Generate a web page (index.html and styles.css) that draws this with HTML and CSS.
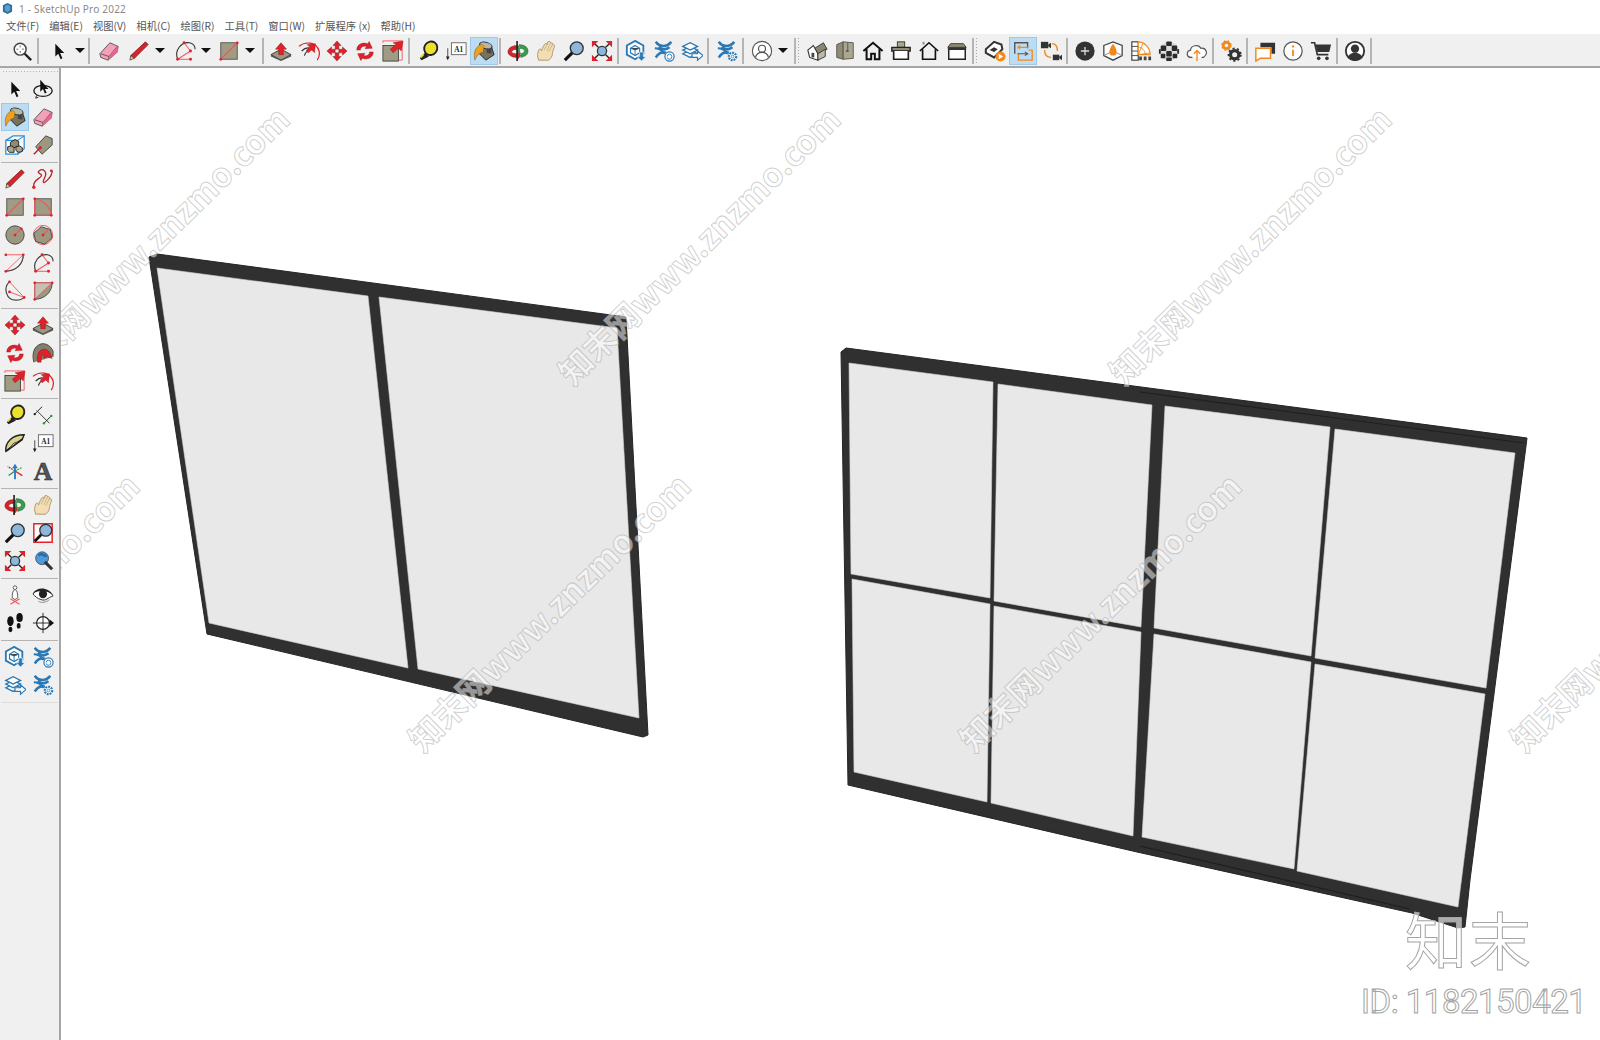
FILE: index.html
```html
<!DOCTYPE html>
<html lang="zh-CN">
<head>
    <meta charset="UTF-8">
    <title>1 - SketchUp Pro 2022</title>
    <link rel="stylesheet" href="styles.css">
</head>
<body>
    <!-- icon sprite, every toolbar button points at one of these -->
    <svg class="sprite" xmlns="http://www.w3.org/2000/svg">
        <symbol id="i-search" viewBox="0 0 24 24"><circle cx="10" cy="10" r="6.5" fill="#fff" stroke="#444" stroke-width="1.6"/><path d="M10 6v2M10 12v2M6 10h2M12 10h2" stroke="#555"/><path d="M15 15l7 7" stroke="#222" stroke-width="2.6"/></symbol>
        <symbol id="i-select" viewBox="0 0 24 24"><path d="M8 4v14l3.200-3.100 2.600 6 1.900-.9-2.500-5.700h4.500z" fill="#111"/></symbol>
        <symbol id="i-eraser" viewBox="0 0 24 24"><path d="M2 15L13 3l9 4-1 6-10 9-8-3z" fill="#f3a0b8" stroke="#555"/><path d="M3 15l9 3 9-11M12 18l-1 4" fill="none" stroke="#555"/><path d="M12 18l9-11 1 6-11 9z" fill="#e4688c"/></symbol>
        <symbol id="i-pencil" viewBox="0 0 24 24"><path d="M19 2l3 3L7 20l-4-1 0-2z" fill="#d8232a" stroke="#611" stroke-width=".7"/><path d="M3 17l-1 5 5-2z" fill="#d9c08c" stroke="#333" stroke-width=".7"/></symbol>
        <symbol id="i-arc3" viewBox="0 0 24 24"><path d="M4 21C0 11 8 2 17 3c4 1 6 4 6 7" fill="none" stroke="#333" stroke-width="1.2"/><path d="M4 21L18 12 11 3M4 21h14" fill="none" stroke="#ef5a60" stroke-width="1.1"/><g fill="#e0202a"><circle cx="4" cy="21" r="1.6"/><circle cx="18" cy="12" r="1.6"/><circle cx="11" cy="3" r="1.6"/><circle cx="18" cy="21" r="1.6"/></g></symbol>
        <symbol id="i-rect" viewBox="0 0 24 24"><rect x="3" y="3" width="18" height="18" fill="#a09c84" stroke="#555"/><path d="M3 21L21 3" stroke="#f0565c" stroke-width="1.3"/><circle cx="3" cy="21" r="1.5" fill="#e0202a"/><circle cx="21" cy="3" r="1.5" fill="#e0202a"/></symbol>
        <symbol id="i-rotrect" viewBox="0 0 24 24"><rect x="3" y="3" width="18" height="18" fill="#a09c84" stroke="#555"/><path d="M3 3v18h18M3 3C12 4 20 12 21 21" fill="none" stroke="#f0565c" stroke-width="1.2"/><g fill="#e0202a"><circle cx="3" cy="3" r="1.5"/><circle cx="3" cy="21" r="1.5"/><circle cx="21" cy="21" r="1.5"/></g></symbol>
        <symbol id="i-push" viewBox="0 0 24 24"><path d="M1 16l11-6 11 6-11 6z" fill="#9c9880" stroke="#333"/><path d="M1 16v2l11 5 11-5v-2l-11 6z" fill="#555"/><path d="M12 3l6 7h-3.500v6h-5v-6H6z" fill="#e0202a" stroke="#811" stroke-width=".5"/></symbol>
        <symbol id="i-follow" viewBox="0 0 24 24"><path d="M1 7C8 1 20 2 23 12c1 4 0 7-2 10" fill="none" stroke="#e0202a" stroke-width="1.3"/><path d="M4 12c3-3 6-4 9-3M7 17c1-3 3-5 5-5" fill="none" stroke="#333" stroke-width="1.3"/><path d="M19 4l-1 10-3-3-4 3-2-3 4-3-3-3z" fill="#e0202a" stroke="#811" stroke-width=".4"/></symbol>
        <symbol id="i-move" viewBox="0 0 24 24"><g fill="#e0202a" stroke="#611" stroke-width=".4"><path d="M12 1l4.500 5H14v4h-4V6H7.500z"/><path d="M12 23l4.500-5H14v-4h-4v4H7.500z"/><path d="M1 12l5-4.500V10h4v4H6v2.500z"/><path d="M23 12l-5-4.500V10h-4v4h4v2.500z"/></g></symbol>
        <symbol id="i-rotate" viewBox="0 0 24 24"><g fill="#e0202a" stroke="#811" stroke-width=".4"><path d="M3 11C3 5 9 2 15 4l1.500-2.500L20 9l-8 .5 1.500-2.500C10 6 7 8 7 11z"/><path d="M21 13c0 6-6 9-12 7l-1.500 2.500L4 15l8-.5-1.500 2.500c3.500 1 6.500-1 6.500-4z"/></g></symbol>
        <symbol id="i-scale" viewBox="0 0 24 24"><rect x="1" y="6" width="17" height="17" fill="#a09c84" stroke="#444"/><path d="M1 3v-2h21v21h-4" fill="none" stroke="#f0565c"/><path d="M23 1l-2 11-3-3-6 5-3-4 6-5-3-2z" fill="#e0202a" stroke="#811" stroke-width=".4"/></symbol>
        <symbol id="i-tape" viewBox="0 0 24 24"><ellipse cx="15" cy="9" rx="7" ry="7.500" transform="rotate(35 15 9)" fill="#ece02c" stroke="#222" stroke-width="2"/><path d="M9 14l-6 6 2 2 8-4z" fill="#222"/><path d="M4 19l3-3" stroke="#ece02c" stroke-width="2"/></symbol>
        <symbol id="i-text" viewBox="0 0 24 24"><rect x="7" y="3" width="16" height="13" fill="#fff" stroke="#666"/><text x="15" y="13" class="sym-text">A1</text><path d="M3 9v10" stroke="#444"/><path d="M1 18h4l-2 4z" fill="#222"/></symbol>
        <symbol id="i-paint" viewBox="0 0 24 24"><path d="M9 4l11 3 3 9-9 6-8-8z" fill="#76725c" stroke="#222"/><ellipse cx="14" cy="6" rx="7" ry="3.500" transform="rotate(15 14 6)" fill="#bbb6a0" stroke="#222"/><path d="M10 5C3 6 0 13 2 22c2-5 5-8 9-9l1-6z" fill="#f0a11c" stroke="#654" stroke-width=".5"/><path d="M15 9l5 1v5l-5-1z" fill="#444"/></symbol>
        <symbol id="i-orbit" viewBox="0 0 24 24"><path d="M11 6C5 6 1 9 1 13c0 3 4 6 10 6v3l4-5-4-5v3c-3 0-6-1-6-2s2-3 6-3z" fill="#d8232a" stroke="#511" stroke-width=".4"/><path d="M13 15c4 0 6-1 6-3s-2-3-6-3V6l-4 4 4 4zM13 5c6 0 10 3 10 7s-3 6-8 7v-3" fill="#3a9a4a" stroke="#143" stroke-width=".4"/><path d="M11 1v22" stroke="#222" stroke-width="1.800"/></symbol>
        <symbol id="i-hand" viewBox="0 0 24 24"><path d="M4 22C2 17 3 14 4 11c1-2 3-1 3 1 1-3 3-7 4-8 2-1 2 1 2 1l1-3c2-1 3 0 3 1 1 0 3 0 2 2 2 0 3 1 2 3-1 3-2 5-2 7 0 3-2 5-4 7z" fill="#f3deb4" stroke="#a89468"/><path d="M10 11l3-6M13 12l4-9M15 13l4-8" fill="none" stroke="#c0aa7c" stroke-width=".8"/></symbol>
        <symbol id="i-zoom" viewBox="0 0 24 24"><circle cx="15" cy="9" r="7" fill="#8db8dc" stroke="#333" stroke-width="1.500"/><path d="M10 14l-8 8" stroke="#111" stroke-width="3.400"/></symbol>
        <symbol id="i-zoomwin" viewBox="0 0 24 24"><path d="M2 2h20v20H2z" fill="#fff" stroke="#e8202a" stroke-width="1.600"/><circle cx="15" cy="9" r="6.500" fill="#8db8dc" stroke="#333" stroke-width="1.400"/><path d="M10 14l-7 7" stroke="#111" stroke-width="3"/></symbol>
        <symbol id="i-zoomext" viewBox="0 0 24 24"><circle cx="12" cy="12" r="5" fill="#8db8dc" stroke="#333" stroke-width="1.400"/><path d="M8 16l-5 5M16 8l4-4M8 8L4 4M16 16l4 4" stroke="#222" stroke-width="1.500"/><g fill="#e0202a"><path d="M1 1h7L1 8zM23 1h-7l7 7zM1 23h7l-7-7zM23 23h-7l7-7z"/></g></symbol>
        <symbol id="i-prev" viewBox="0 0 24 24"><circle cx="11" cy="9" r="7" fill="#4f9ad6" stroke="#456"/><path d="M6 5c3-3 9-2 11 2l-3 1c-2-2-4-3-6-1z" fill="#1e6eb0"/><path d="M14 13l8 8" stroke="#333" stroke-width="3.400"/></symbol>
        <symbol id="i-wh" viewBox="0 0 24 24"><path d="M11 1l9 5v9l-9 6-9-5V6z" fill="#fff" stroke="#2a78b4" stroke-width="2"/><path d="M11 6l5 3v5l-5 3-5-3V9z" fill="none" stroke="#2a78b4" stroke-width="1.300"/><path d="M11 11v6M6 9l5 2 5-2" stroke="#2a78b4"/><path d="M16 13h4v5h3l-5 5-5-5h3z" fill="#2a78b4" stroke="#fff" stroke-width=".7"/></symbol>
        <symbol id="i-ext" viewBox="0 0 24 24"><path d="M3 2c4 6 12 6 17 0M3 19c4-6 8-6 11-5M6 8c4 3 8 3 12 0" fill="none" stroke="#2a78b4" stroke-width="2.800"/><path d="M2 9c7 0 8 3 11 6" fill="none" stroke="#2a78b4" stroke-width="2.400"/><circle cx="18" cy="18" r="5" fill="#fff" stroke="#2a78b4" stroke-width="1.300"/><path d="M15.500 18a2.500 2.500 0 0 1 5 0M20.500 18a2.500 2.500 0 0 1-5 1" fill="none" stroke="#2a78b4"/></symbol>
        <symbol id="i-extgear" viewBox="0 0 24 24"><path d="M3 2c4 6 12 6 17 0M3 19c4-6 8-6 11-5M6 8c4 3 8 3 12 0" fill="none" stroke="#2a78b4" stroke-width="2.800"/><path d="M2 9c7 0 8 3 11 6" fill="none" stroke="#2a78b4" stroke-width="2.400"/><circle cx="18" cy="18" r="4" fill="#fff" stroke="#2a78b4" stroke-width="2.400" stroke-dasharray="2 1"/><circle cx="18" cy="18" r="1.500" fill="#fff" stroke="#2a78b4" stroke-width=".8"/></symbol>
        <symbol id="i-layers" viewBox="0 0 24 24"><g fill="#fff" stroke="#2a78b4" stroke-width="1.500"><path d="M2 15l8-4 8 4-8 4z"/><path d="M2 11l8-4 8 4-8 4z"/><path d="M2 7l8-4 8 4-8 4z"/></g><path d="M12 15h6v-3l6 5-6 5v-3h-6z" fill="#fff" stroke="#2a78b4" stroke-width="1.300"/></symbol>
        <symbol id="i-user" viewBox="0 0 24 24"><circle cx="12" cy="12" r="10.500" fill="#fff" stroke="#555" stroke-width="1.200"/><circle cx="12" cy="9.500" r="3.800" fill="none" stroke="#555" stroke-width="1.300"/><path d="M5 19c1-5 4-5.500 7-5.500s6 .5 7 5.500" fill="none" stroke="#555" stroke-width="1.300"/></symbol>
        <symbol id="i-iso" viewBox="0 0 24 24"><path d="M8 10l11-7 4 7-10 5z" fill="#8a8672" stroke="#333"/><path d="M2 11l6-5 5 9v7l-9-3z" fill="#fff" stroke="#333" stroke-width="1.200"/><path d="M13 15l8-5v8l-8 4z" fill="#bdb9a2" stroke="#333"/><rect x="6" y="14" width="3" height="5" fill="#444"/></symbol>
        <symbol id="i-door" viewBox="0 0 24 24"><path d="M3 5l7-3v19l-7-2z" fill="#8f8b74" stroke="#555"/><path d="M10 2l11 1v17l-11 1z" fill="#aba78f" stroke="#555"/><path d="M15 3v9" stroke="#555"/><path d="M13 12h3" stroke="#222"/></symbol>
        <symbol id="i-home" viewBox="0 0 24 24"><path d="M1.500 12L12 3l10.500 9M5 10v11h5v-6h4v6h5V10" fill="none" stroke="#111" stroke-width="2.200"/></symbol>
        <symbol id="i-roof" viewBox="0 0 24 24"><rect x="8" y="2" width="8" height="6" fill="#aba78f" stroke="#333"/><path d="M2 8h20v4H2z" fill="#8f8b74" stroke="#222" stroke-width="1.500"/><path d="M4 12v9h16v-9" fill="#fff" stroke="#222" stroke-width="1.800"/></symbol>
        <symbol id="i-home2" viewBox="0 0 24 24"><path d="M2 12L12 3l10 9" fill="none" stroke="#111" stroke-width="1.800"/><path d="M5 10v11h14V10" fill="none" stroke="#111" stroke-width="1.800"/><path d="M6 2v3" stroke="#8f8b74" stroke-width="2"/></symbol>
        <symbol id="i-box" viewBox="0 0 24 24"><path d="M5 4h14l3 4H2z" fill="#8f8b74" stroke="#333"/><path d="M2 8h20v3H2z" fill="#333"/><path d="M3 11v10h18V11" fill="#fff" stroke="#222" stroke-width="1.600"/></symbol>
        <symbol id="i-tagplay" viewBox="0 0 24 24"><path d="M2 10l9-8 8 3 1 5-9 9-9-5z" fill="#fff" stroke="#333" stroke-width="2.200"/><path d="M6 11l5-3 4 2-4 3z" fill="#333"/><circle cx="18" cy="18" r="5.500" fill="#f18a1e"/><path d="M16 15l5 3-5 3z" fill="#fff"/></symbol>
        <symbol id="i-swap" viewBox="0 0 24 24"><path d="M3 15V3h14v6" fill="none" stroke="#555" stroke-width="1.500"/><path d="M6 8h12M6 8l3-2M6 8l3 2" fill="none" stroke="#f18a1e" stroke-width="1.200"/><path d="M7 15v7h15V11h-4" fill="none" stroke="#f18a1e" stroke-width="1.500"/><path d="M6 15h11l-3-2M17 15l-3 2" fill="none" stroke="#555" stroke-width="1.200"/></symbol>
        <symbol id="i-camswap" viewBox="0 0 24 24"><rect x="1" y="2" width="8" height="7" fill="#333"/><path d="M9 5l3-2v6L9 7z" fill="#333"/><rect x="14" y="16" width="7" height="6" fill="#333"/><path d="M21 18l3-2v6l-3-2z" fill="#333"/><path d="M13 4c4 0 6 3 6 8M5 11c0 6 3 8 7 8" fill="none" stroke="#f18a1e" stroke-width="1.500"/></symbol>
        <symbol id="i-plus" viewBox="0 0 24 24"><circle cx="12" cy="12" r="10.500" fill="#333"/><path d="M12 7.500v9M7.500 12h9" stroke="#ddd" stroke-width="1.400"/></symbol>
        <symbol id="i-shield" viewBox="0 0 24 24"><path d="M2 6l10-4 10 4v11l-10 5-10-5z" fill="#fff" stroke="#444" stroke-width="1.400"/><path d="M2 17l10-5 10 5" fill="none" stroke="#888"/><path d="M12 4c3 4 4 7 4 9a4 4 0 0 1-8 0c0-2 1-5 4-9z" fill="#f18a1e"/></symbol>
        <symbol id="i-chart" viewBox="0 0 24 24"><rect x="2" y="2" width="7" height="20" fill="#fff" stroke="#444" stroke-width="1.300"/><path d="M2 7h7M2 12h7M2 17h7" stroke="#444"/><path d="M9 2c7 0 13 7 13 14H9z" fill="#fff" stroke="#f18a1e" stroke-width="1.200"/><path d="M9 8c4 0 7 3 8 8M14 4l-5 12 13-2" fill="none" stroke="#f18a1e"/><path d="M10 22v-4h3v4zM15 22v-4h3v4zM20 22v-4h3v4z" fill="#444"/></symbol>
        <symbol id="i-checker" viewBox="0 0 24 24"><circle cx="12" cy="12" r="10.500" fill="#ddd"/><g fill="#2b2b2b"><rect x="9" y="1.500" width="6" height="5" rx="1"/><rect x="3" y="6" width="6" height="6" rx="1"/><rect x="15" y="6" width="6" height="6" rx="1"/><rect x="9" y="12" width="6" height="6" rx="1"/><rect x="3" y="15" width="5" height="5" rx="1"/><rect x="16" y="15" width="5" height="5" rx="1"/><rect x="9" y="19" width="6" height="4" rx="1"/><rect x="1" y="10" width="2" height="5"/><rect x="21" y="10" width="2" height="5"/></g></symbol>
        <symbol id="i-cloud" viewBox="0 0 24 24"><path d="M7 19H6c-6 0-6-7-1-8 0-5 9-7 11-2 6-1 9 6 3 10h-2" fill="#fff" stroke="#555" stroke-width="1.300"/><path d="M12 23v-11M8.500 15l3.500-3.500 3.500 3.500" fill="none" stroke="#f18a1e" stroke-width="1.500"/></symbol>
        <symbol id="i-gears" viewBox="0 0 24 24"><circle cx="7" cy="6" r="3.500" fill="none" stroke="#f18a1e" stroke-width="3"/><circle cx="7" cy="6" r="5" fill="none" stroke="#f18a1e" stroke-width="1.500" stroke-dasharray="2 2"/><circle cx="16" cy="16" r="4.500" fill="none" stroke="#333" stroke-width="3.500"/><circle cx="16" cy="16" r="6.800" fill="none" stroke="#333" stroke-width="1.800" stroke-dasharray="2.400 2.400"/></symbol>
        <symbol id="i-chat" viewBox="0 0 24 24"><path d="M7 8V3h16v12h-4v-7z" fill="#333"/><path d="M2 9h16v11H7l-5 3z" fill="#fff" stroke="#f18a1e" stroke-width="1.600"/></symbol>
        <symbol id="i-info" viewBox="0 0 24 24"><circle cx="12" cy="12" r="10" fill="#fff" stroke="#555" stroke-width="1.300"/><path d="M12 10.500v7" stroke="#f18a1e" stroke-width="2"/><circle cx="12" cy="7" r="1.300" fill="#f18a1e"/></symbol>
        <symbol id="i-cart" viewBox="0 0 24 24"><path d="M1 3h4l3 13h12" fill="none" stroke="#333" stroke-width="1.800"/><path d="M6 5h17l-2 8H8z" fill="#333"/><circle cx="9.500" cy="20" r="2" fill="#333"/><circle cx="18.500" cy="20" r="2" fill="#333"/></symbol>
        <symbol id="i-account" viewBox="0 0 24 24"><circle cx="12" cy="12" r="10" fill="#fff" stroke="#333" stroke-width="2"/><circle cx="12" cy="9.500" r="4.500" fill="#333"/><path d="M4 19c2-4 5-5 8-5s6 1 8 5c-2 2-5 4-8 4s-6-2-8-4z" fill="#333"/></symbol>
        <symbol id="i-orbitsel" viewBox="0 0 24 24"><ellipse cx="12" cy="14" rx="10" ry="6" fill="none" stroke="#222" stroke-width="1.500"/><path d="M9 2v13l3-3 2 5 2-1-2-4h4z" fill="#111"/><path d="M5 19l-1 3 3-1" fill="none" stroke="#222"/></symbol>
        <symbol id="i-comp" viewBox="0 0 24 24"><path d="M2 7l8-5h12v14l-7 6H2z" fill="#fff" stroke="#2a8fdc" stroke-width="1.400"/><path d="M2 7h13v15M15 7l7-5" fill="none" stroke="#2a8fdc" stroke-width="1.200"/><path d="M7 9l5-3 4 2v5l-5 2-4-2z" fill="#8f8b74" stroke="#222"/><path d="M4 14l4-1 3 2v5H6l-2-2z" fill="#aba78f" stroke="#222"/><path d="M13 14l4-1 3 2v4l-4 1-3-2z" fill="#aba78f" stroke="#222"/></symbol>
        <symbol id="i-tag" viewBox="0 0 24 24"><path d="M4 14L15 2l7 3 0 7-11 10z" fill="#9c9880" stroke="#444"/><path d="M2 22l7-7" stroke="#b2202a" stroke-width="1.500"/><circle cx="9" cy="15" r="1.800" fill="#e0202a"/></symbol>
        <symbol id="i-free" viewBox="0 0 24 24"><path d="M2 21C0 14 8 12 10 9S4 6 8 3s9 1 6 7-2 8 3 3 5-9 5-10" fill="none" stroke="#b2202a" stroke-width="1.400"/><circle cx="2" cy="21" r="1.800" fill="#e0202a"/><circle cx="21" cy="3" r="1.500" fill="#e0202a"/></symbol>
        <symbol id="i-circle" viewBox="0 0 24 24"><circle cx="12" cy="12" r="10" fill="#9c9880" stroke="#444"/><path d="M12 12l7-7" stroke="#f0565c" stroke-width="1.300"/><circle cx="12" cy="12" r="1.500" fill="#e0202a"/><circle cx="19" cy="5" r="1.300" fill="#e0202a"/></symbol>
        <symbol id="i-poly" viewBox="0 0 24 24"><circle cx="12" cy="12" r="10.500" fill="none" stroke="#f0565c"/><path d="M10 3l10 3 2 9-8 7-10-3-2-9z" fill="#9c9880" stroke="#444"/><path d="M12 12l7-7" stroke="#f0565c" stroke-width="1.300"/><circle cx="12" cy="12" r="1.500" fill="#e0202a"/></symbol>
        <symbol id="i-arc2" viewBox="0 0 24 24"><path d="M2 3h19" stroke="#f0565c"/><path d="M2 21L21 3M2 21C14 20 21 13 21 3" fill="none" stroke="#f0565c" stroke-width=".9"/><path d="M2 21C14 20 21 13 21 3" fill="none" stroke="#444" stroke-width="1.200"/><g fill="#e0202a"><circle cx="2" cy="3" r="1.500"/><circle cx="2" cy="21" r="1.500"/><circle cx="21" cy="3" r="1.500"/></g></symbol>
        <symbol id="i-arcb" viewBox="0 0 24 24"><path d="M6 2C-1 8 2 22 13 22c3 0 7-1 9-3" fill="none" stroke="#444" stroke-width="1.300"/><path d="M6 2l16 17-16-6" fill="none" stroke="#f0565c"/><g fill="#e0202a"><circle cx="6" cy="2" r="1.500"/><circle cx="22" cy="19" r="1.500"/><circle cx="6" cy="13" r="1.500"/></g></symbol>
        <symbol id="i-pie" viewBox="0 0 24 24"><path d="M3 3h19C22 13 14 21 3 21z" fill="#9c9880" stroke="#444"/><path d="M3 3h19L3 21z" fill="#fff" fill-opacity=".4" stroke="#f0565c"/><g fill="#e0202a"><circle cx="3" cy="3" r="1.500"/><circle cx="22" cy="3" r="1.500"/><circle cx="3" cy="21" r="1.500"/></g></symbol>
        <symbol id="i-offset" viewBox="0 0 24 24"><path d="M2 22C0 14 1 5 10 2c6-1 11 3 13 8v6" fill="#84806c" stroke="#444"/><path d="M6 22c-1-7 1-13 6-14 4-1 7 2 8 5l2 5-6-2-3 2c0-3 0-4-1-4s-2 2-2 8z" fill="#e0202a" stroke="#611" stroke-width=".4"/></symbol>
        <symbol id="i-dim" viewBox="0 0 24 24"><path d="M5 7l14 14M11 3l-8 8M21 13l-8 8" fill="none" stroke="#333"/><path d="M3 11l8-8M13 21l8-8" stroke="#333" stroke-dasharray="1.500 1.500"/><circle cx="3" cy="11" r="1.300" fill="#222"/><circle cx="21" cy="13" r="1.300" fill="#2a9a3a"/><circle cx="13" cy="21" r="1.300" fill="#2a9a3a"/></symbol>
        <symbol id="i-prot" viewBox="0 0 24 24"><path d="M2 21C1 12 8 3 22 3l-2 5z" fill="#ddd38c" stroke="#222" stroke-width="1.500"/><path d="M2 21l18-13" stroke="#222" stroke-width="2"/><path d="M7 17c1-3 4-6 8-6l-8 6z" fill="#f2ecc0" stroke="#333"/></symbol>
        <symbol id="i-axes" viewBox="0 0 24 24"><path d="M12 12l-7 5" stroke="#2a9a3a" stroke-width="1.400"/><path d="M12 12l8-4" stroke="#2a9a3a" stroke-width="1.400" stroke-dasharray="2 1"/><path d="M12 12L4 7" stroke="#e0202a" stroke-width="1.400" stroke-dasharray="2 1"/><path d="M12 12l8 5" stroke="#e0202a" stroke-width="1.400"/><path d="M12 4l3 5h-2v12h-2V9H9z" fill="#2d78c8"/></symbol>
        <symbol id="i-3dtext" viewBox="0 0 24 24"><text x="12" y="22" class="sym-3d">A</text></symbol>
        <symbol id="i-camera" viewBox="0 0 24 24"><circle cx="12" cy="4" r="2" fill="#fff" stroke="#555"/><path d="M12 6c-3 1-3 6-3 9l3 2 3-2c0-3 0-8-3-9z" fill="#fff" stroke="#555"/><path d="M7 22l10-6M17 22L7 16" stroke="#f05a60" stroke-width="1.300"/></symbol>
        <symbol id="i-eye" viewBox="0 0 24 24"><path d="M1 11C6 4 17 4 23 13c-6 2-8 6-13 4-4-1-6-3-9-6z" fill="#fff" stroke="#222"/><circle cx="12" cy="11" r="4.500" fill="#222"/><path d="M1 10C6 3 17 3 23 12c-6-5-14-6-22-2z" fill="#222"/><path d="M7 19c4 2 9 1 12-2" fill="none" stroke="#888"/></symbol>
        <symbol id="i-feet" viewBox="0 0 24 24"><ellipse cx="7" cy="10" rx="3.500" ry="5.500" fill="#111"/><rect x="5" y="16" width="4" height="6" rx="2" fill="#111"/><ellipse cx="17" cy="6" rx="3.500" ry="5" fill="#111"/><rect x="14" y="12" width="4" height="6" rx="2" fill="#111"/></symbol>
        <symbol id="i-section" viewBox="0 0 24 24"><circle cx="12" cy="12" r="7" fill="#fff" stroke="#222" stroke-width="1.300"/><path d="M12 1v22M1 12h20" stroke="#222"/><path d="M19 8l5 4-5 4z" fill="#111"/></symbol>
    </svg>

    <div class="app">
        <div class="titlebar">
            <svg class="app-logo" viewBox="0 0 12 12"><path d="M6 0l5 2.500v7L6 12l-5-2.500v-7z" fill="#2a6f9e"/><path d="M6 2l3 1.500v4L6 10 3 8V3.500z" fill="#5aa0cc"/></svg>
            <span class="app-name">1 - SketchUp Pro 2022</span>
        </div>

        <ul class="menubar">
            <li class="m1">文件(F)</li>
            <li class="m2">编辑(E)</li>
            <li class="m2">视图(V)</li>
            <li class="m2">相机(C)</li>
            <li class="m2">绘图(R)</li>
            <li class="m2">工具(T)</li>
            <li class="m2">窗口(W)</li>
            <li class="m2">扩展程序 (x)</li>
            <li class="m2">帮助(H)</li>
        </ul>

        <!-- Toolbar de cima -->
        <div class="toolbar">
            <span class="tool"><svg><use href="#i-search"/></svg></span>
            <i class="sep"></i>
            <span class="tool ml3"><svg><use href="#i-select"/></svg></span><i class="drop"></i>
            <i class="sep"></i>
            <span class="tool ml2"><svg><use href="#i-eraser"/></svg></span>
            <span class="tool ml2"><svg><use href="#i-pencil"/></svg></span><i class="drop"></i>
            <span class="tool ml4"><svg><use href="#i-arc3"/></svg></span><i class="drop"></i>
            <span class="tool ml2"><svg><use href="#i-rect"/></svg></span><i class="drop"></i>
            <i class="sep ml5"></i>
            <span class="tool"><svg><use href="#i-push"/></svg></span>
            <span class="tool"><svg><use href="#i-follow"/></svg></span>
            <span class="tool"><svg><use href="#i-move"/></svg></span>
            <span class="tool"><svg><use href="#i-rotate"/></svg></span>
            <span class="tool"><svg><use href="#i-scale"/></svg></span>
            <i class="sep"></i>
            <span class="tool ml1"><svg><use href="#i-tape"/></svg></span>
            <span class="tool"><svg><use href="#i-text"/></svg></span>
            <span class="tool active"><svg><use href="#i-paint"/></svg></span>
            <i class="sep"></i>
            <span class="tool"><svg><use href="#i-orbit"/></svg></span>
            <span class="tool"><svg><use href="#i-hand"/></svg></span>
            <span class="tool"><svg><use href="#i-zoom"/></svg></span>
            <span class="tool"><svg><use href="#i-zoomext"/></svg></span>
            <i class="sep"></i>
            <span class="tool"><svg><use href="#i-wh"/></svg></span>
            <span class="tool"><svg><use href="#i-ext"/></svg></span>
            <span class="tool"><svg><use href="#i-layers"/></svg></span>
            <i class="sep"></i>
            <span class="tool ml1"><svg><use href="#i-extgear"/></svg></span>
            <i class="sep"></i>
            <span class="tool ml1"><svg><use href="#i-user"/></svg></span><i class="drop"></i>
            <i class="sep ml4"></i>
            <i class="grip"></i>
            <span class="tool"><svg><use href="#i-iso"/></svg></span>
            <span class="tool"><svg><use href="#i-door"/></svg></span>
            <span class="tool"><svg><use href="#i-home"/></svg></span>
            <span class="tool"><svg><use href="#i-roof"/></svg></span>
            <span class="tool"><svg><use href="#i-home2"/></svg></span>
            <span class="tool"><svg><use href="#i-box"/></svg></span>
            <i class="sep"></i>
            <i class="grip"></i>
            <span class="tool"><svg><use href="#i-tagplay"/></svg></span>
            <span class="tool active"><svg><use href="#i-swap"/></svg></span>
            <span class="tool"><svg><use href="#i-camswap"/></svg></span>
            <i class="sep"></i>
            <span class="tool"><svg><use href="#i-plus"/></svg></span>
            <span class="tool"><svg><use href="#i-shield"/></svg></span>
            <span class="tool"><svg><use href="#i-chart"/></svg></span>
            <span class="tool"><svg><use href="#i-checker"/></svg></span>
            <span class="tool"><svg><use href="#i-cloud"/></svg></span>
            <i class="sep"></i>
            <span class="tool"><svg><use href="#i-gears"/></svg></span>
            <i class="sep"></i>
            <span class="tool"><svg><use href="#i-chat"/></svg></span>
            <span class="tool"><svg><use href="#i-info"/></svg></span>
            <span class="tool"><svg><use href="#i-cart"/></svg></span>
            <i class="sep"></i>
            <span class="tool"><svg><use href="#i-account"/></svg></span>
            <i class="sep"></i>
        </div>

        <div class="main">
            <!-- Toolbar lateral -->
            <div class="sidebar">
                <div class="side-grip"></div>
                <div class="side-group">
                    <span class="tool"><svg><use href="#i-select"/></svg></span>
                    <span class="tool"><svg><use href="#i-orbitsel"/></svg></span>
                    <span class="tool active"><svg><use href="#i-paint"/></svg></span>
                    <span class="tool"><svg><use href="#i-eraser"/></svg></span>
                    <span class="tool"><svg><use href="#i-comp"/></svg></span>
                    <span class="tool"><svg><use href="#i-tag"/></svg></span>
                </div>
                <div class="side-group">
                    <span class="tool"><svg><use href="#i-pencil"/></svg></span>
                    <span class="tool"><svg><use href="#i-free"/></svg></span>
                    <span class="tool"><svg><use href="#i-rect"/></svg></span>
                    <span class="tool"><svg><use href="#i-rotrect"/></svg></span>
                    <span class="tool"><svg><use href="#i-circle"/></svg></span>
                    <span class="tool"><svg><use href="#i-poly"/></svg></span>
                    <span class="tool"><svg><use href="#i-arc2"/></svg></span>
                    <span class="tool"><svg><use href="#i-arc3"/></svg></span>
                    <span class="tool"><svg><use href="#i-arcb"/></svg></span>
                    <span class="tool"><svg><use href="#i-pie"/></svg></span>
                </div>
                <div class="side-group">
                    <span class="tool"><svg><use href="#i-move"/></svg></span>
                    <span class="tool"><svg><use href="#i-push"/></svg></span>
                    <span class="tool"><svg><use href="#i-rotate"/></svg></span>
                    <span class="tool"><svg><use href="#i-offset"/></svg></span>
                    <span class="tool"><svg><use href="#i-scale"/></svg></span>
                    <span class="tool"><svg><use href="#i-follow"/></svg></span>
                </div>
                <div class="side-group">
                    <span class="tool"><svg><use href="#i-tape"/></svg></span>
                    <span class="tool"><svg><use href="#i-dim"/></svg></span>
                    <span class="tool"><svg><use href="#i-prot"/></svg></span>
                    <span class="tool"><svg><use href="#i-text"/></svg></span>
                    <span class="tool"><svg><use href="#i-axes"/></svg></span>
                    <span class="tool"><svg><use href="#i-3dtext"/></svg></span>
                </div>
                <div class="side-group">
                    <span class="tool"><svg><use href="#i-orbit"/></svg></span>
                    <span class="tool"><svg><use href="#i-hand"/></svg></span>
                    <span class="tool"><svg><use href="#i-zoom"/></svg></span>
                    <span class="tool"><svg><use href="#i-zoomwin"/></svg></span>
                    <span class="tool"><svg><use href="#i-zoomext"/></svg></span>
                    <span class="tool"><svg><use href="#i-prev"/></svg></span>
                </div>
                <div class="side-group">
                    <span class="tool"><svg><use href="#i-camera"/></svg></span>
                    <span class="tool"><svg><use href="#i-eye"/></svg></span>
                    <span class="tool"><svg><use href="#i-feet"/></svg></span>
                    <span class="tool"><svg><use href="#i-section"/></svg></span>
                </div>
                <div class="side-group last">
                    <span class="tool"><svg><use href="#i-wh"/></svg></span>
                    <span class="tool"><svg><use href="#i-ext"/></svg></span>
                    <span class="tool"><svg><use href="#i-layers"/></svg></span>
                    <span class="tool"><svg><use href="#i-extgear"/></svg></span>
                </div>
            </div>

            <!-- Area do modelo, o viewBox usa as coordenadas da janela -->
            <svg class="viewport" viewBox="61 68 1539 972">
                <g class="model">
                    <polygon class="edge" points="207,634 149,257 157,254 626,317 648,735 643,737"/>
                    <polygon class="glass" points="157,268 368,296 408,668 209,623"/>
                    <polygon class="glass" points="379,297 617,328 639,718 418,669"/>
                </g>
                <g class="model">
                    <polygon class="edge" points="848,785 841,352 846,348 1527,438 1526,446 1470,880 1465,927 1458,928 1412,913 1137,852"/>
                    <polygon class="glass" points="849,363 993,382 990,598 851,574"/>
                    <polygon class="glass" points="998,384 1152,405 1141,627 994,601"/>
                    <polygon class="glass" points="1165,406 1330,427 1311,656 1154,628"/>
                    <polygon class="glass" points="1335,429 1515,453 1486,688 1315,658"/>
                    <polygon class="glass" points="852,579 990,604 987,802 854,772"/>
                    <polygon class="glass" points="994,606 1141,632 1133,836 991,803"/>
                    <polygon class="glass" points="1154,634 1311,662 1294,869 1142,837"/>
                    <polygon class="glass" points="1315,664 1485,694 1458,907 1297,871"/>
                    <polyline class="edge-line" points="1140,846 1410,909"/>
                    <polyline class="edge-line" points="1140,392 1524,443"/>
                </g>
                <g class="wm">
                    <text transform="translate(22 387) rotate(-44.5)">知末网www.znzmo.com</text>
                    <text transform="translate(573 387) rotate(-44.5)">知末网www.znzmo.com</text>
                    <text transform="translate(1124 387) rotate(-44.5)">知末网www.znzmo.com</text>
                    <text transform="translate(-128 754) rotate(-44.5)">知末网www.znzmo.com</text>
                    <text transform="translate(423 754) rotate(-44.5)">知末网www.znzmo.com</text>
                    <text transform="translate(974 754) rotate(-44.5)">知末网www.znzmo.com</text>
                    <text transform="translate(1525 754) rotate(-44.5)">知末网www.znzmo.com</text>
                </g>
                <text class="stamp-logo" x="1405" y="965">知末</text>
                <text class="stamp-id" x="1361" y="1013">ID: 1182150421</text>
            </svg>
        </div>
    </div>
</body>
</html>
```

FILE: styles.css
```css
/* Reset */
* {
  margin: 0;
  padding: 0;
  box-sizing: border-box;
}

body {
  width: 1600px;
  height: 1040px;
  overflow: hidden;
  background-color: white;
  font-family: "Noto Sans CJK SC", "Liberation Sans", sans-serif;
}

.sprite {
  display: none;
}

.app {
  height: 100%;
  display: flex;
  flex-direction: column;
}

/* Titulo e menu */
.titlebar {
  height: 17px;
  display: flex;
  align-items: center;
  padding-left: 2px;
  gap: 6px;
  flex: none;
}

.app-logo {
  width: 11px;
  height: 11px;
}

.app-name {
  font-family: "Noto Sans", sans-serif;
  font-size: 10px;
  letter-spacing: 0.2px;
  color: #8a8a8a;
}

.menubar {
  height: 17px;
  display: flex;
  align-items: center;
  list-style: none;
  flex: none;
  font-size: 10.3px;
  color: #555;
  white-space: nowrap;
}

.m1 {
  margin-left: 6px;
}

.m2 {
  margin-left: 10px;
}

/* Toolbar de cima */
.toolbar {
  height: 32px;
  flex: none;
  display: flex;
  align-items: center;
  padding: 2px 0 0 8px;
  background-color: #f0f0f0;
}

.tool {
  width: 28px;
  height: 28px;
  flex: none;
  display: flex;
  align-items: center;
  justify-content: center;
}

.tool svg {
  width: 22px;
  height: 22px;
}

.tool.active {
  background-color: #bcdcf4;
  border: 1px solid #9cc8ea;
}

.drop {
  width: 14px;
  height: 28px;
  flex: none;
  position: relative;
}

.drop::after {
  content: "";
  position: absolute;
  left: 2px;
  top: 11px;
  border-left: 5px solid transparent;
  border-right: 5px solid transparent;
  border-top: 5px solid #111;
}

.sep {
  width: 2px;
  height: 26px;
  flex: none;
  margin: 0 3px 0 1px;
  background-color: #b5b5b5;
}

.grip {
  width: 3px;
  height: 28px;
  flex: none;
  margin: 0 3px 0 -2px;
  background-image: radial-gradient(#a8a8a8 35%, transparent 40%);
  background-size: 3px 3px;
}

.ml1 { margin-left: 1px; }
.ml2 { margin-left: 2px; }
.ml3 { margin-left: 3px; }
.ml4 { margin-left: 4px; }
.ml5 { margin-left: 5px; }

.main {
  flex: 1;
  display: flex;
  min-height: 0;
  border-top: 2px solid #a6a6a6;
}

/* Toolbar lateral */
.sidebar {
  width: 61px;
  flex: none;
  background-color: #f0f0f0;
  border-right: 2px solid #a6a6a6;
  padding-left: 1px;
}

.side-grip {
  height: 7px;
  margin: 0 1px;
  background-image: radial-gradient(#b4b4b4 35%, transparent 40%);
  background-size: 3px 3px;
  background-repeat: repeat-x;
  background-position: 0 2px;
}

.side-group {
  display: grid;
  grid-template-columns: 28px 28px;
  grid-auto-rows: 28px;
  padding-bottom: 3px;
  margin-bottom: 2px;
  border-bottom: 1px solid #b5b5b5;
  margin-right: 1px;
}

.side-group.last {
  border-bottom-color: #dcdcdc;
}

.sym-text {
  font-family: "Liberation Serif", serif;
  font-size: 8px;
  font-weight: bold;
  text-anchor: middle;
  fill: #222;
}

.sym-3d {
  font-family: "Liberation Serif", serif;
  font-size: 28px;
  font-weight: bold;
  text-anchor: middle;
  fill: #555;
  stroke: #222;
  stroke-width: 0.6px;
}

/* Modelo e marca d'agua */
.viewport {
  flex: 1;
  display: block;
  height: 100%;
  background-color: white;
}

.edge {
  fill: #303030;
  stroke: #252525;
  stroke-width: 1;
}

.glass {
  fill: #e8e8e8;
  stroke: #d2d2d2;
  stroke-width: 0.6;
}

.edge-line {
  fill: none;
  stroke: #1f1f1f;
  stroke-width: 1.2;
}

.wm text {
  font-family: "Noto Sans CJK SC", sans-serif;
  font-size: 33px;
  font-weight: bold;
  fill: rgba(255, 255, 255, 0.5);
  stroke: rgba(170, 170, 170, 0.55);
  stroke-width: 1px;
}

.stamp-logo {
  font-family: "Noto Sans CJK SC", sans-serif;
  font-size: 62px;
  letter-spacing: 2px;
  fill: rgba(255, 255, 255, 0.6);
  stroke: #a4a4a4;
  stroke-width: 1px;
}

.stamp-id {
  font-family: Roboto, sans-serif;
  font-size: 33px;
  letter-spacing: -0.5px;
  fill: white;
  stroke: #a4a4a4;
  stroke-width: 1px;
}
```
